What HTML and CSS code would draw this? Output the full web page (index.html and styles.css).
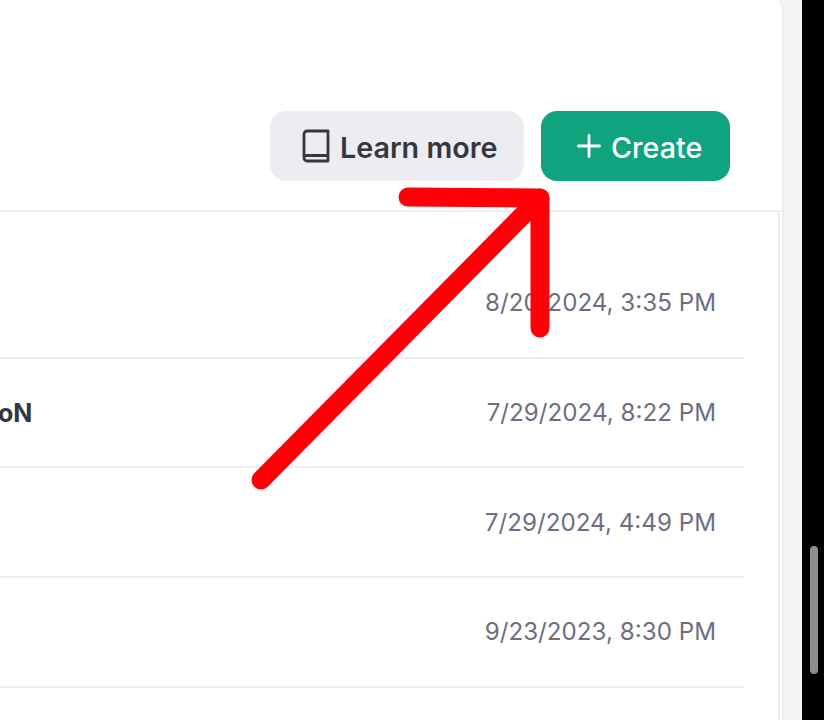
FILE: index.html
```html
<!DOCTYPE html>
<html lang="en">
<head>
    <meta charset="UTF-8">
    <meta name="viewport" content="width=device-width, initial-scale=1.0">
    <title>Assistants</title>
    <link rel="stylesheet" href="styles.css">
</head>
<body>

    <div class="page">
        <div class="panel">
            <div class="top-bar">
                <button class="btn btn-grey">
                    <svg class="icon-book" viewBox="0 0 28 34" fill="none" stroke="currentColor" stroke-width="2.8" stroke-linecap="round" stroke-linejoin="round">
                        <path d="M2 29V5a3 3 0 0 1 3-3h21v30H5a3 3 0 0 1-3-3 2.500 2.500 0 0 1 2.500-2.500H26"/>
                    </svg>
                    <span class="btn-label">Learn more</span>
                </button>
                <button class="btn btn-green">
                    <svg class="icon-plus" viewBox="0 0 24 24" fill="none" stroke="currentColor" stroke-width="2.800" stroke-linecap="round">
                        <path d="M12 1.500v21M1.500 12h21"/>
                    </svg>
                    <span class="btn-label">Create</span>
                </button>
            </div>
            <div class="rows">
                <div class="row"><span class="name"></span><span class="date">8/20/2024, 3:35 PM</span></div>
                <div class="row"><span class="name">oN</span><span class="date">7/29/2024, 8:22 PM</span></div>
                <div class="row"><span class="name"></span><span class="date">7/29/2024, 4:49 PM</span></div>
                <div class="row"><span class="name"></span><span class="date">9/23/2023, 8:30 PM</span></div>
            </div>
        </div>
    </div>

    <div class="scroll-track">
        <div class="scroll-thumb"></div>
    </div>

    <!-- red arrow drawn on top of the screenshot -->
    <svg class="arrow" width="824" height="720" viewBox="0 0 824 720" fill="none" stroke="#ff0008" stroke-width="19" stroke-linecap="round" stroke-linejoin="round">
        <path d="M261 480L540 198"/>
        <path d="M408 197L540 198V328"/>
    </svg>

</body>
</html>
```

FILE: styles.css
```css
body {
    margin: 0;
    height: 720px;
    display: flex;
    overflow: hidden;
    background-color: #000;
    font-family: Inter, "Liberation Sans", sans-serif;
    color: #353740;
}
.page {
    width: 802px;
    background-color: #f4f4f5;
}
.panel {
    width: 782px;
    height: 726px;
    margin-top: -6px;
    background-color: #fff;
    border-right: 2px solid #ececf1;
    border-top-right-radius: 18px;
}
.top-bar {
    height: 218px;
    box-sizing: border-box;
    padding: 117px 52px 0 0;
    display: flex;
    justify-content: flex-end;
    gap: 17px;
    border-bottom: 2px solid #ececf1;
}
.btn {
    height: 70px;
    display: flex;
    align-items: center;
    padding: 0;
    border: none;
    border-radius: 16px;
    font-family: inherit;
    font-size: 28.7px;
    font-weight: 600;
}
.btn-label {
    padding-top: 2px;
}
.btn-grey {
    width: 254px;
    gap: 10px;
    padding-left: 32px;
    background-color: #ececf1;
    color: #353740;
}
.btn-green {
    width: 189px;
    gap: 10px;
    padding-left: 36px;
    background-color: #10a37f;
    color: #fff;
    font-weight: 500;
}
.icon-book {
    width: 28px;
    height: 34px;
    flex-shrink: 0;
}
.icon-plus {
    width: 24px;
    height: 24px;
    flex-shrink: 0;
}
.rows {
    width: 780px;
    height: 508px;
    box-sizing: border-box;
    padding-top: 37px;
    border-right: 2px solid #ececf1;
}
.row {
    width: 744px;
    height: 109.7px;
    box-sizing: border-box;
    display: flex;
    align-items: center;
    justify-content: space-between;
    padding-right: 28px;
    border-bottom: 2px solid #ececf1;
}
.name {
    font-size: 25px;
    font-weight: 700;
    margin-left: -2px;
}
.date {
    font-size: 24.2px;
    color: #6e6e80;
}
.scroll-track {
    width: 22px;
    padding: 546px 6px 0 8px;
    box-sizing: border-box;
}
.scroll-thumb {
    height: 128px;
    border-radius: 4px;
    background-color: #8e8e8e;
}
.arrow {
    position: absolute;
    left: 0;
    top: 0;
}
```
